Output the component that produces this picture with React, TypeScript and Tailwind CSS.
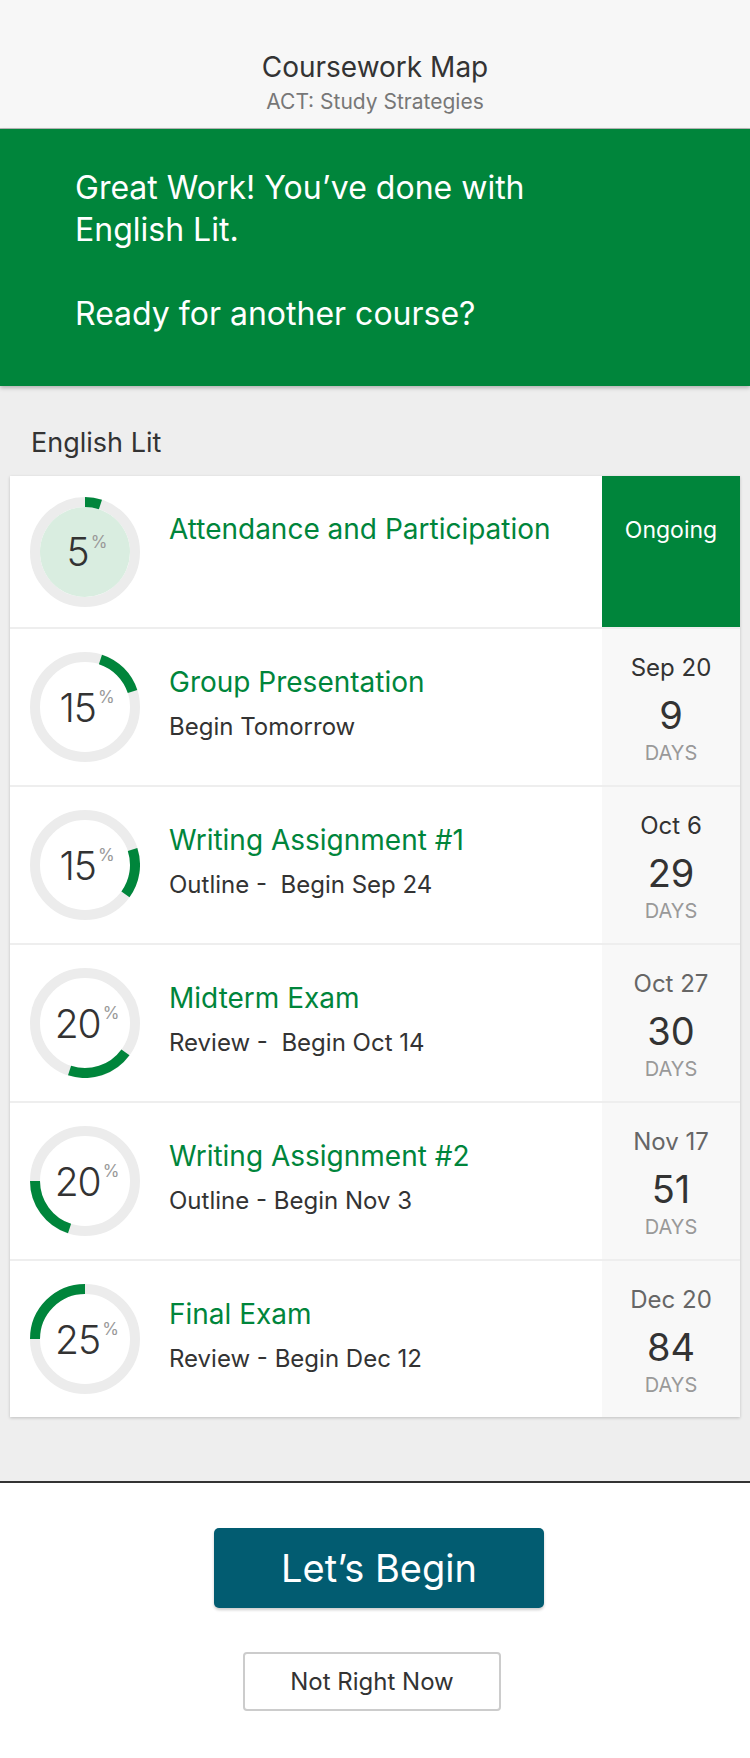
import React from "react";

type Task = {
  pct: number;
  start: number;
  title: string;
  sub?: string;
  date?: string;
  days?: number;
  dark?: boolean;
  ongoing?: boolean;
};

const tasks: Task[] = [
  { pct: 5, start: 0, title: "Attendance and Participation", ongoing: true },
  { pct: 15, start: 5, title: "Group Presentation", sub: "Begin Tomorrow", date: "Sep 20", days: 9, dark: true },
  { pct: 15, start: 20, title: "Writing Assignment #1", sub: "Outline -  Begin Sep 24", date: "Oct 6", days: 29, dark: true },
  { pct: 20, start: 35, title: "Midterm Exam", sub: "Review -  Begin Oct 14", date: "Oct 27", days: 30 },
  { pct: 20, start: 55, title: "Writing Assignment #2", sub: "Outline - Begin Nov 3", date: "Nov 17", days: 51 },
  { pct: 25, start: 75, title: "Final Exam", sub: "Review - Begin Dec 12", date: "Dec 20", days: 84 },
];

function arcPath(startPct: number, endPct: number, r: number, c: number) {
  const a0 = (startPct / 100) * Math.PI * 2;
  const a1 = (endPct / 100) * Math.PI * 2;
  const x0 = c + r * Math.sin(a0);
  const y0 = c - r * Math.cos(a0);
  const x1 = c + r * Math.sin(a1);
  const y1 = c - r * Math.cos(a1);
  const large = endPct - startPct > 50 ? 1 : 0;
  return `M ${x0} ${y0} A ${r} ${r} 0 ${large} 1 ${x1} ${y1}`;
}

function Ring({ pct, start, active }: { pct: number; start: number; active?: boolean }) {
  return (
    <div className="relative w-[110px] h-[110px] shrink-0">
      <svg width="110" height="110" viewBox="0 0 110 110" className="absolute inset-0">
        <circle cx="55" cy="55" r="50" fill="none" stroke="#ececec" strokeWidth="10" />
        {active && <circle cx="55" cy="55" r="45" fill="#d9ede0" />}
        <path d={arcPath(start, start + pct, 50, 55)} fill="none" stroke="#00853b" strokeWidth="10" />
      </svg>
      <div className="absolute inset-0 flex items-center justify-center pl-[4px]">
        <span className="text-[39px] leading-none font-light tracking-[-1px] text-[#333]">{pct}</span>
        <span className="text-[17px] leading-none text-[#999] self-start mt-[37px] ml-[2px]">%</span>
      </div>
    </div>
  );
}

function Row({ t }: { t: Task }) {
  return (
    <div className={`flex ${t.ongoing ? "h-[151px]" : "h-[156px]"} bg-white`}>
      <div className="flex-1 flex items-center pl-[20px]">
        <Ring pct={t.pct} start={t.start} active={t.ongoing} />
        <div className="self-start flex flex-col pl-[29px] pt-[36px]">
          <div className="text-[28px] leading-[34px] text-[#00853b]">{t.title}</div>
          {t.sub && (
            <div className="mt-[13px] text-[24px] leading-[30px] text-[#333] whitespace-pre">{t.sub}</div>
          )}
        </div>
      </div>
      {t.ongoing ? (
        <div className="w-[138px] bg-[#00853b] flex justify-center pt-[40px]">
          <span className="text-[23px] leading-[28px] text-white">Ongoing</span>
        </div>
      ) : (
        <div className="w-[138px] bg-[#f8f8f8] flex flex-col items-center pt-[24px]">
          <span className={`text-[24px] leading-[30px] ${t.dark ? "text-[#333]" : "text-[#666]"}`}>{t.date}</span>
          <span className="mt-[9px] text-[38px] leading-[46px] text-[#333]">{t.days}</span>
          <span className="mt-[3px] text-[20px] leading-[24px] text-[#999]">DAYS</span>
        </div>
      )}
    </div>
  );
}

export default function App() {
  return (
    <main className="w-[750px] min-h-[1758px] bg-white flex flex-col" style={{ fontFamily: "Inter, 'Noto Sans', sans-serif" }}>
      <header className="h-[129px] bg-[#f7f7f7] border-b border-[#b8b8b8] flex flex-col items-center pt-[50px]">
        <h1 className="text-[28px] leading-[34px] text-[#333]">Coursework Map</h1>
        <p className="mt-[5px] text-[21px] leading-[26px] text-[#777]">ACT: Study Strategies</p>
      </header>

      <section className="relative z-10 h-[257px] bg-[#00853b] pl-[75px] pt-[38px] shadow-[0_2px_4px_rgba(0,0,0,0.25)]">
        <p className="text-[32px] leading-[42px] text-white">
          Great Work! You’ve done with
          <br />
          English Lit.
          <br />
          <br />
          Ready for another course?
        </p>
      </section>

      <section className="bg-[#eeeeee] h-[1095px] flex flex-col">
        <h2 className="mt-[41px] ml-[31px] text-[27px] leading-[32px] text-[#333]">English Lit</h2>
        <div className="mt-[17px] mx-[10px] flex flex-col gap-[2px] bg-[#eeeeee] shadow-[0_1px_3px_rgba(0,0,0,0.2)]">
          {tasks.map((t) => (
            <Row key={t.title} t={t} />
          ))}
        </div>
      </section>

      <footer className="border-t-2 border-[#333] flex flex-col pt-[45px]">
        <button className="ml-[214px] w-[330px] h-[80px] rounded-[5px] bg-[#025c71] text-white text-[38px] shadow-[0_2px_3px_rgba(0,0,0,0.2)]">
          Let’s Begin
        </button>
        <button className="mt-[44px] ml-[243px] w-[258px] h-[59px] rounded-[4px] border-2 border-[#cccccc] bg-white text-[#333] text-[24px]">
          Not Right Now
        </button>
      </footer>
    </main>
  );
}
